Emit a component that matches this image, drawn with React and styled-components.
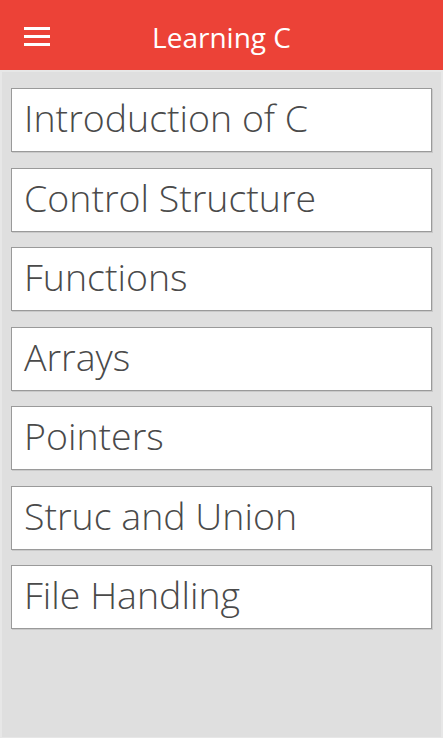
import React from "react";
import styled, { createGlobalStyle } from "styled-components";

const Global = createGlobalStyle`
  html, body { margin: 0; padding: 0; height: 100%; }
  body { background: #dfdfdf; font-family: "Open Sans", "Noto Sans", sans-serif; }
  #root { height: 100%; }
`;

const Page = styled.div`
  display: flex;
  flex-direction: column;
  height: 738px;
  width: 443px;
  overflow: hidden;
`;

const Header = styled.header`
  flex: 0 0 70px;
  height: 70px;
  background: #ec4237;
  position: relative;
  display: flex;
  align-items: center;
  justify-content: center;
`;

const MenuButton = styled.button`
  position: absolute;
  left: 24px;
  top: 27px;
  width: 26px;
  height: 19px;
  padding: 0;
  border: 0;
  background: transparent;
  display: flex;
  flex-direction: column;
  justify-content: space-between;
  cursor: pointer;
`;

const Bar = styled.span`
  display: block;
  height: 3px;
  width: 26px;
  background: #fff;
`;

const Title = styled.h1`
  margin: 0;
  color: #fff;
  font-weight: 400;
  font-size: 28px;
  line-height: 1;
  transform: translateY(2px);
`;

const Main = styled.main`
  flex: 1;
  display: flex;
  flex-direction: column;
  gap: 15.5px;
  padding: 16px 9px 0 9px;
  border: 2px solid #e7e7e7;
  border-bottom-width: 1px;
  background: #dfdfdf;
`;

const Item = styled.div`
  height: 62px;
  background: #fff;
  border: 1px solid #9a9a9a;
  box-shadow: 1px 1px 0 #c9c9c9;
  display: flex;
  align-items: center;
  padding-left: 12px;
  color: #4a4a4a;
  font-size: 37.5px;
  font-weight: 300;
  line-height: 1;
  white-space: nowrap;
`;

const Label = styled.span`
  display: block;
  transform: translateY(-2px);
`;

const topics = [
  "Introduction of C",
  "Control Structure",
  "Functions",
  "Arrays",
  "Pointers",
  "Struc and Union",
  "File Handling",
];

export default function App() {
  return (
    <Page>
      <Global />
      <Header>
        <MenuButton aria-label="menu">
          <Bar />
          <Bar />
          <Bar />
        </MenuButton>
        <Title>Learning C</Title>
      </Header>
      <Main>
        {topics.map((t) => (
          <Item key={t}>
            <Label>{t}</Label>
          </Item>
        ))}
      </Main>
    </Page>
  );
}
